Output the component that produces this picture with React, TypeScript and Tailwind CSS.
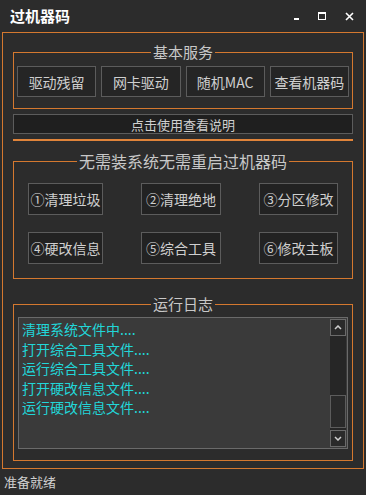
const FONT = "font-['Microsoft_YaHei','Noto_Sans_CJK_SC',sans-serif]";

const basic = ["驱动残留", "网卡驱动", "随机MAC", "查看机器码"];

const tools = [
    ["①清理垃圾", "②清理绝地", "③分区修改"],
    ["④硬改信息", "⑤综合工具", "⑥修改主板"],
];

const logs = [
    "清理系统文件中....",
    "打开综合工具文件....",
    "运行综合工具文件....",
    "打开硬改信息文件....",
    "运行硬改信息文件....",
];

const ToolButton = ({ label, w }: { label: string; w: string }) => (
    <button
        className={`${w} h-[32px] whitespace-nowrap border border-[#5c5c5c] bg-[#222222] text-[14px] leading-none text-[#cfcfcf]`}
    >
        {label}
    </button>
);

export default function App() {
    return (
        <div
            className={`${FONT} flex h-[495px] w-[366px] flex-col bg-[#2c2c2c] text-[#cfcfcf]`}
        >
            {/* title bar */}
            <div className="flex h-[32px] items-center justify-between pl-[10px] pr-[12px]">
                <span className="text-[15px] font-bold text-white">
                    过机器码
                </span>
                <div className="flex items-center gap-[19px] text-white">
                    <div className="mt-[6px] h-[2px] w-[5px] bg-white" />
                    <div className="h-[8px] w-[8px] border border-t-[2px] border-white" />
                    <svg width="9" height="9" viewBox="0 0 9 9">
                        <path
                            d="M1 1 L8 8 M8 1 L1 8"
                            stroke="white"
                            strokeWidth="1.6"
                        />
                    </svg>
                </div>
            </div>

            {/* main frame */}
            <div className="mx-[2px] flex h-[437px] flex-col border border-[#d4782f] px-[10px]">
                <fieldset className="mt-[9px] border border-[#d4782f] px-[3px] pb-[11px] pt-[4px]">
                    <legend className="mx-auto px-[2px] text-[15px] leading-[20px] text-[#c8c8c8]">
                        基本服务
                    </legend>
                    <div className="flex gap-[5px]">
                        {basic.map((b) => (
                            <button
                                key={b}
                                className="h-[31px] flex-1 whitespace-nowrap border border-[#5c5c5c] bg-[#252525] text-[14px] leading-none text-[#cfcfcf]"
                            >
                                {b}
                            </button>
                        ))}
                    </div>
                </fieldset>

                <button className="mt-[5px] h-[20px] w-full border border-[#5c5c5c] bg-[#1f1f1f] text-[13px] leading-none text-[#d0d0d0]">
                    点击使用查看说明
                </button>
                <div className="mt-[5px] h-[2px] w-full bg-[#e0843a]" />

                <fieldset className="mt-[9px] border border-[#d4782f] px-[14px] pb-[14px] pt-[11px]">
                    <legend className="mx-auto px-[2px] text-[16px] leading-[22px] text-[#c8c8c8]">
                        无需装系统无需重启过机器码
                    </legend>
                    <div className="flex flex-col gap-[17px]">
                        {tools.map((row, i) => (
                            <div key={i} className="flex justify-between">
                                <ToolButton label={row[0]} w="w-[75px]" />
                                <ToolButton label={row[1]} w="w-[80px]" />
                                <ToolButton label={row[2]} w="w-[79px]" />
                            </div>
                        ))}
                    </div>
                </fieldset>

                <fieldset className="mt-[15px] border border-[#d4782f] px-[4px] pb-[11px] pt-[3px]">
                    <legend className="mx-auto px-[2px] text-[15px] leading-[20px] text-[#c8c8c8]">
                        运行日志
                    </legend>
                    <div className="flex h-[132px] border border-[#6a6a6a] bg-[#3a3a3a]">
                        <div className="flex-1 pl-[3px] pt-[2px]">
                            {logs.map((l) => (
                                <div
                                    key={l}
                                    className="text-[14px] leading-[19.5px] text-[#22d6d8]"
                                >
                                    {l}
                                </div>
                            ))}
                        </div>
                        <div className="my-[1px] mr-[1px] flex w-[16px] flex-col bg-[#262626]">
                            <div className="flex h-[17px] items-center justify-center border border-[#6a6a6a] bg-[#2a2a2a]">
                                <svg width="8" height="5" viewBox="0 0 8 5">
                                    <path
                                        d="M1 4 L4 1 L7 4"
                                        stroke="#cfcfcf"
                                        strokeWidth="1.5"
                                        fill="none"
                                    />
                                </svg>
                            </div>
                            <div className="flex-1" />
                            <div className="mb-[2px] h-[33px] border border-[#5c5c5c] bg-[#2a2a2a]" />
                            <div className="flex h-[17px] items-center justify-center border border-[#6a6a6a] bg-[#2a2a2a]">
                                <svg width="8" height="5" viewBox="0 0 8 5">
                                    <path
                                        d="M1 1 L4 4 L7 1"
                                        stroke="#cfcfcf"
                                        strokeWidth="1.5"
                                        fill="none"
                                    />
                                </svg>
                            </div>
                        </div>
                    </div>
                </fieldset>
            </div>

            {/* status bar */}
            <div className="flex flex-1 items-center pl-[4px] text-[13px] text-[#cfcfcf]">
                准备就绪
            </div>
        </div>
    );
}
